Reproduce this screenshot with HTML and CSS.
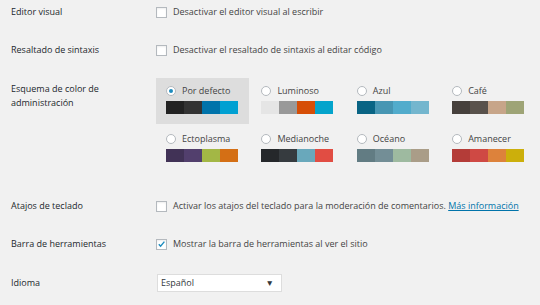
FILE: index.html
```html
<!DOCTYPE html>
<html lang="es">
<head>
<meta charset="utf-8">
<link rel="stylesheet" href="styles.css">
</head>
<body>
<div class="form">
  <div class="row r1">
    <div class="th">Editor visual</div>
    <label class="td"><span class="cb"></span>Desactivar el editor visual al escribir</label>
  </div>
  <div class="row r2">
    <div class="th">Resaltado de sintaxis</div>
    <label class="td"><span class="cb"></span>Desactivar el resaltado de sintaxis al editar código</label>
  </div>
  <div class="row r3">
    <div class="th th-top">Esquema de color de<br>administración</div>
    <div class="picker">
      <div class="opt sel"><div class="name"><span class="radio on"></span>Por defecto</div><div class="sw"><i style="background:#222"></i><i style="background:#333"></i><i style="background:#0073aa"></i><i style="background:#00a0d2"></i></div></div>
      <div class="opt"><div class="name"><span class="radio"></span>Luminoso</div><div class="sw"><i style="background:#e5e5e5"></i><i style="background:#999"></i><i style="background:#d64e07"></i><i style="background:#04a4cc"></i></div></div>
      <div class="opt"><div class="name"><span class="radio"></span>Azul</div><div class="sw"><i style="background:#096484"></i><i style="background:#4796b3"></i><i style="background:#52accc"></i><i style="background:#74b6ce"></i></div></div>
      <div class="opt"><div class="name"><span class="radio"></span>Café</div><div class="sw"><i style="background:#46403c"></i><i style="background:#59524c"></i><i style="background:#c7a589"></i><i style="background:#9ea476"></i></div></div>
      <div class="opt"><div class="name"><span class="radio"></span>Ectoplasma</div><div class="sw"><i style="background:#413256"></i><i style="background:#523f6d"></i><i style="background:#a3b745"></i><i style="background:#d46f15"></i></div></div>
      <div class="opt"><div class="name"><span class="radio"></span>Medianoche</div><div class="sw"><i style="background:#25282b"></i><i style="background:#363b3f"></i><i style="background:#69a8bb"></i><i style="background:#e14d43"></i></div></div>
      <div class="opt"><div class="name"><span class="radio"></span>Océano</div><div class="sw"><i style="background:#627c83"></i><i style="background:#738e96"></i><i style="background:#9ebaa0"></i><i style="background:#aa9d88"></i></div></div>
      <div class="opt"><div class="name"><span class="radio"></span>Amanecer</div><div class="sw"><i style="background:#b43c38"></i><i style="background:#cf4944"></i><i style="background:#dd823b"></i><i style="background:#ccaf0b"></i></div></div>
    </div>
  </div>
  <div class="row r4">
    <div class="th">Atajos de teclado</div>
    <label class="td"><span class="cb"></span>Activar los atajos del teclado para la moderación de comentarios.&nbsp;<a href="#">Más información</a></label>
  </div>
  <div class="row r5">
    <div class="th">Barra de herramientas</div>
    <label class="td"><span class="cb"><svg viewBox="0 0 10 10" width="10" height="10"><path d="M2 5.2 L4 7.4 L8.2 2.4" fill="none" stroke="#1e8cbe" stroke-width="1.6"/></svg></span>Mostrar la barra de herramientas al ver el sitio</label>
  </div>
  <div class="row r6">
    <div class="th">Idioma</div>
    <div class="td"><div class="select"><span>Español</span><span class="arrow">▼</span></div></div>
  </div>
</div>
</body>
</html>
```
FILE: styles.css
```css
* { box-sizing: border-box; }
html, body { margin: 0; background: #f1f1f1; }
body {
  font-family: "Open Sans", "Noto Sans", sans-serif;
  font-size: 9px;
  line-height: 14px;
  color: #23282d;
  width: 540px;
  height: 305px;
  overflow: hidden;
}
.form { display: flex; flex-direction: column; }
.row { display: grid; grid-template-columns: 156px 1fr; align-items: center; height: 24px; }
.th { padding-left: 11px; color: #23282d; }
.td { display: flex; align-items: center; color: #444; }
.r1 { margin-top: 0; }
.r2 { margin-top: 14px; }
.r3 { margin-top: 16px; height: auto; align-items: start; }
.th-top { padding-top: 4px; }
.r4 { margin-top: 22px; }
.r5 { margin-top: 14px; }
.r6 { margin-top: 15px; }
.cb {
  width: 11px; height: 11px; margin-left: 0; margin-right: 6px;
  border: 1px solid #b4b9be; background: #fff;
  box-shadow: inset 0 1px 2px rgba(0,0,0,.07);
  display: flex; align-items: center; justify-content: center;
  flex: none;
}
.cb svg { display: block; }
a { color: #0073aa; text-decoration: underline; }
.picker { display: grid; grid-template-columns: repeat(4, 93px); column-gap: 2.4px; row-gap: 2px; }
.opt { height: 46px; padding: 6px 0 0 10px; }
.opt.sel { background: #ddd; }
.name { display: flex; align-items: center; height: 14px; color: #444; }
.radio {
  width: 10px; height: 10px; border-radius: 50%;
  border: 1px solid #b4b9be; background: #fff; margin-right: 6px; flex: none;
  display: flex; align-items: center; justify-content: center;
}
.radio.on::after { content: ""; width: 4px; height: 4px; border-radius: 50%; background: #1e8cbe; }
.sw { display: flex; margin-top: 3px; }
.sw i { display: block; width: 18px; height: 13px; }
.select {
  margin-left: 1px; width: 125px; height: 18px;
  background: #fff; border: 1px solid #ddd;
  display: flex; align-items: center; justify-content: space-between;
  padding: 0 7px 0 3px; color: #32373c;
}
.arrow { font-size: 8.5px; color: #32373c; }
```
